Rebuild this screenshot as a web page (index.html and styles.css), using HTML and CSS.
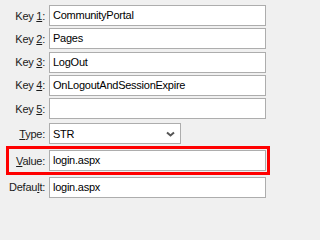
FILE: index.html
```html
<!DOCTYPE html>
<html>
<head>
<meta charset="utf-8">
<link rel="stylesheet" href="styles.css">
</head>
<body>
<div class="form">
  <div class="row"><label class="lbl">Key <u>1</u>:</label><div class="field">CommunityPortal</div></div>
  <div class="row"><label class="lbl">Key <u>2</u>:</label><div class="field">Pages</div></div>
  <div class="row"><label class="lbl">Key <u>3</u>:</label><div class="field">LogOut</div></div>
  <div class="row"><label class="lbl">Key <u>4</u>:</label><div class="field">OnLogoutAndSessionExpire</div></div>
  <div class="row"><label class="lbl">Key <u>5</u>:</label><div class="field"></div></div>
  <div class="row row-type"><label class="lbl"><u>T</u>ype:</label>
    <div class="select"><span class="select-text">STR</span>
      <svg class="chev" width="9" height="6" viewBox="0 0 9 6"><path d="M1 1.5 L4.5 4.5 L8 1.5" fill="none" stroke="#555" stroke-width="2"/></svg>
    </div>
  </div>
  <div class="row hl"><label class="lbl"><u>V</u>alue:</label><div class="field">login.aspx</div></div>
  <div class="row row-def"><label class="lbl">Defau<u>l</u>t:</label><div class="field">login.aspx</div></div>
</div>
</body>
</html>
```
FILE: styles.css
```css
html, body {
  margin: 0;
  padding: 0;
  background: #f0f0f0;
}
body {
  width: 271px;
  height: 202px;
  overflow: hidden;
  font-family: "Liberation Sans", Arial, sans-serif;
  font-size: 11px;
  letter-spacing: -0.25px;
  color: #000;
}
.form {
  display: flex;
  flex-direction: column;
  padding-top: 5px;
  gap: 2.34px;
}
.row {
  display: grid;
  grid-template-columns: 45px 217px;
  column-gap: 4px;
  align-items: center;
  height: 21px;
}
.lbl {
  text-align: right;
  white-space: nowrap;
  color: #1a1a1a;
}
.lbl u {
  text-decoration-thickness: 1px;
  text-underline-offset: 1px;
}
.field {
  box-sizing: border-box;
  height: 21px;
  border: 1px solid #adadad;
  background: #fff;
  padding-left: 3px;
  line-height: 19px;
  white-space: nowrap;
  overflow: hidden;
}
.row-type {
  grid-template-columns: 45px 132px;
  margin-top: 1.5px;
}
.select {
  box-sizing: border-box;
  height: 21px;
  border: 1px solid #adadad;
  background: #fff;
  padding-left: 3px;
  padding-right: 5px;
  display: flex;
  align-items: center;
  justify-content: space-between;
}
.chev {
  display: block;
}
.hl {
  box-sizing: content-box;
  margin-top: 0;
  margin-left: 6px;
  width: 257px;
  grid-template-columns: 36px 217px;
  border: 3px solid #f00;
  padding: 1px 1px 1px 0;
}
.row-def {
  margin-top: -1px;
}
```
